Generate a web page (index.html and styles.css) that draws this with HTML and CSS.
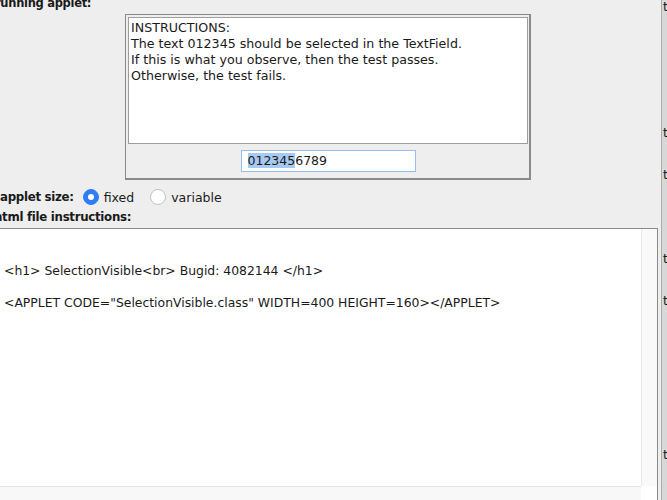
FILE: index.html
```html
<!DOCTYPE html>
<html>
<head>
<meta charset="utf-8">
<link rel="stylesheet" href="styles.css">
</head>
<body>
<div class="screen">
  <div class="main">
    <div class="label lbl-running">running applet:</div>
    <div class="applet-frame">
      <div class="applet">
        <div class="textarea">INSTRUCTIONS:<br>The text 012345 should be selected in the TextField.<br>If this is what you observe, then the test passes.<br>Otherwise, the test fails.</div>
        <div class="tf-row">
          <div class="textfield"><span class="sel">012345</span>6789</div>
        </div>
      </div>
    </div>
    <div class="size-row">
      <span class="label lbl-size">applet size:</span>
      <span class="radio checked"></span><span class="opt">fixed</span>
      <span class="radio"></span><span class="opt">variable</span>
    </div>
    <div class="label lbl-html">html file instructions:</div>
    <div class="panel">
      <div class="panel-body">
        <div class="editor">
          <div class="line">&lt;h1&gt; SelectionVisible&lt;br&gt; Bugid: 4082144 &lt;/h1&gt;</div>
          <div class="line blank"></div>
          <div class="line">&lt;APPLET CODE="SelectionVisible.class" WIDTH=400 HEIGHT=160&gt;&lt;/APPLET&gt;</div>
        </div>
        <div class="vtrack"></div>
      </div>
      <div class="hrow">
        <div class="htrack"></div>
        <div class="corner"></div>
      </div>
    </div>
  </div>
  <div class="gap"></div>
  <div class="strip">
    <div class="t t1">t</div>
    <div class="t t2">t</div>
    <div class="t t3">t</div>
    <div class="t t4">t</div>
    <div class="t t5">t</div>
    <div class="t t6">t</div>
  </div>
</div>
</body>
</html>
```
FILE: styles.css
```css
html, body {
  margin: 0;
  padding: 0;
  background: #eeeeee;
}
.screen {
  width: 667px;
  height: 500px;
  overflow: hidden;
  display: flex;
  font-family: "DejaVu Sans", sans-serif;
  font-size: 12px;
  color: #1a1a1a;
}
.main {
  width: 658px;
  flex: none;
  display: flex;
  flex-direction: column;
  overflow: hidden;
}
.label {
  font-weight: bold;
  font-size: 11.8px;
  letter-spacing: -0.3px;
  white-space: nowrap;
  line-height: 16px;
}
.lbl-running {
  font-size: 11.5px;
  margin-top: -5px;
  margin-left: -5px;
  height: 16px;
}
.applet-frame {
  margin-top: 3px;
  margin-left: 125px;
  width: 400px;
  padding: 2px 1px 1px 2px;
  border: 1px solid #8a8a8a;
  border-right-width: 2px;
  border-bottom-width: 2px;
  background: #eeeeee;
}
.applet {
  width: 400px;
  height: 160px;
  display: flex;
  flex-direction: column;
}
.textarea {
  box-sizing: border-box;
  height: 127px;
  background: #ffffff;
  border: 1px solid #9e9e9e;
  padding: 2px 2px;
  line-height: 16px;
  font-size: 12.65px;
  white-space: nowrap;
}
.tf-row {
  display: flex;
  justify-content: center;
  padding-top: 6px;
}
.textfield {
  box-sizing: border-box;
  width: 175px;
  height: 22px;
  border: 1px solid #96bfee;
  background: #ffffff;
  padding: 0 6px;
  line-height: 20px;
  font-size: 12.5px;
}
.sel {
  background: #a7c9f3;
}
.size-row {
  margin-top: 7px;
  height: 20px;
  display: flex;
  align-items: center;
  white-space: nowrap;
}
.lbl-size {
  margin-left: 0;
  margin-right: 9px;
}
.radio {
  box-sizing: border-box;
  width: 16px;
  height: 16px;
  border-radius: 50%;
  border: 1px solid #c2c2c2;
  background: #ffffff;
  margin-right: 5px;
  flex: none;
}
.radio.checked {
  background: #2f7cf6;
  border-color: #2f7cf6;
  display: flex;
  align-items: center;
  justify-content: center;
}
.radio.checked::after {
  content: "";
  width: 6px;
  height: 6px;
  border-radius: 50%;
  background: #ffffff;
}
.opt {
  font-size: 12.5px;
  margin-right: 16px;
}
.lbl-html {
  margin-left: -6px;
  margin-top: 2px;
  height: 16px;
}
.panel {
  margin-top: 3px;
  flex: 1;
  border-top: 1px solid #8a8a8a;
  border-right: 1px solid #8a8a8a;
  display: flex;
  flex-direction: column;
}
.panel-body {
  height: 257px;
  display: flex;
}
.editor {
  width: 641px;
  background: #ffffff;
  padding: 34px 0 0 4px;
  box-sizing: border-box;
  font-size: 12.4px;
  line-height: 16px;
  white-space: nowrap;
}
.line.blank {
  height: 16px;
}
.vtrack {
  flex: 1;
  background: #f9f9f9;
  border-left: 1px solid #e8e8e8;
}
.hrow {
  flex: 1;
  display: flex;
}
.htrack {
  width: 641px;
  background: #f8f8f8;
  border-top: 1px solid #e4e4e4;
}
.corner {
  flex: 1;
  background: #ffffff;
}
.gap {
  width: 3px;
  flex: none;
}
.strip {
  flex: 1;
  background: #d8d8d8;
  border-left: 1px solid #ababab;
  display: flex;
  flex-direction: column;
  overflow: hidden;
  padding-left: 1px;
}
.t {
  font-size: 12.5px;
  line-height: 16px;
  height: 16px;
}
.t1 { margin-top: -1px; }
.t2 { margin-top: 110px; }
.t3 { margin-top: 26px; }
.t4 { margin-top: 68px; }
.t5 { margin-top: 26px; }
.t6 { margin-top: 138px; }
```
